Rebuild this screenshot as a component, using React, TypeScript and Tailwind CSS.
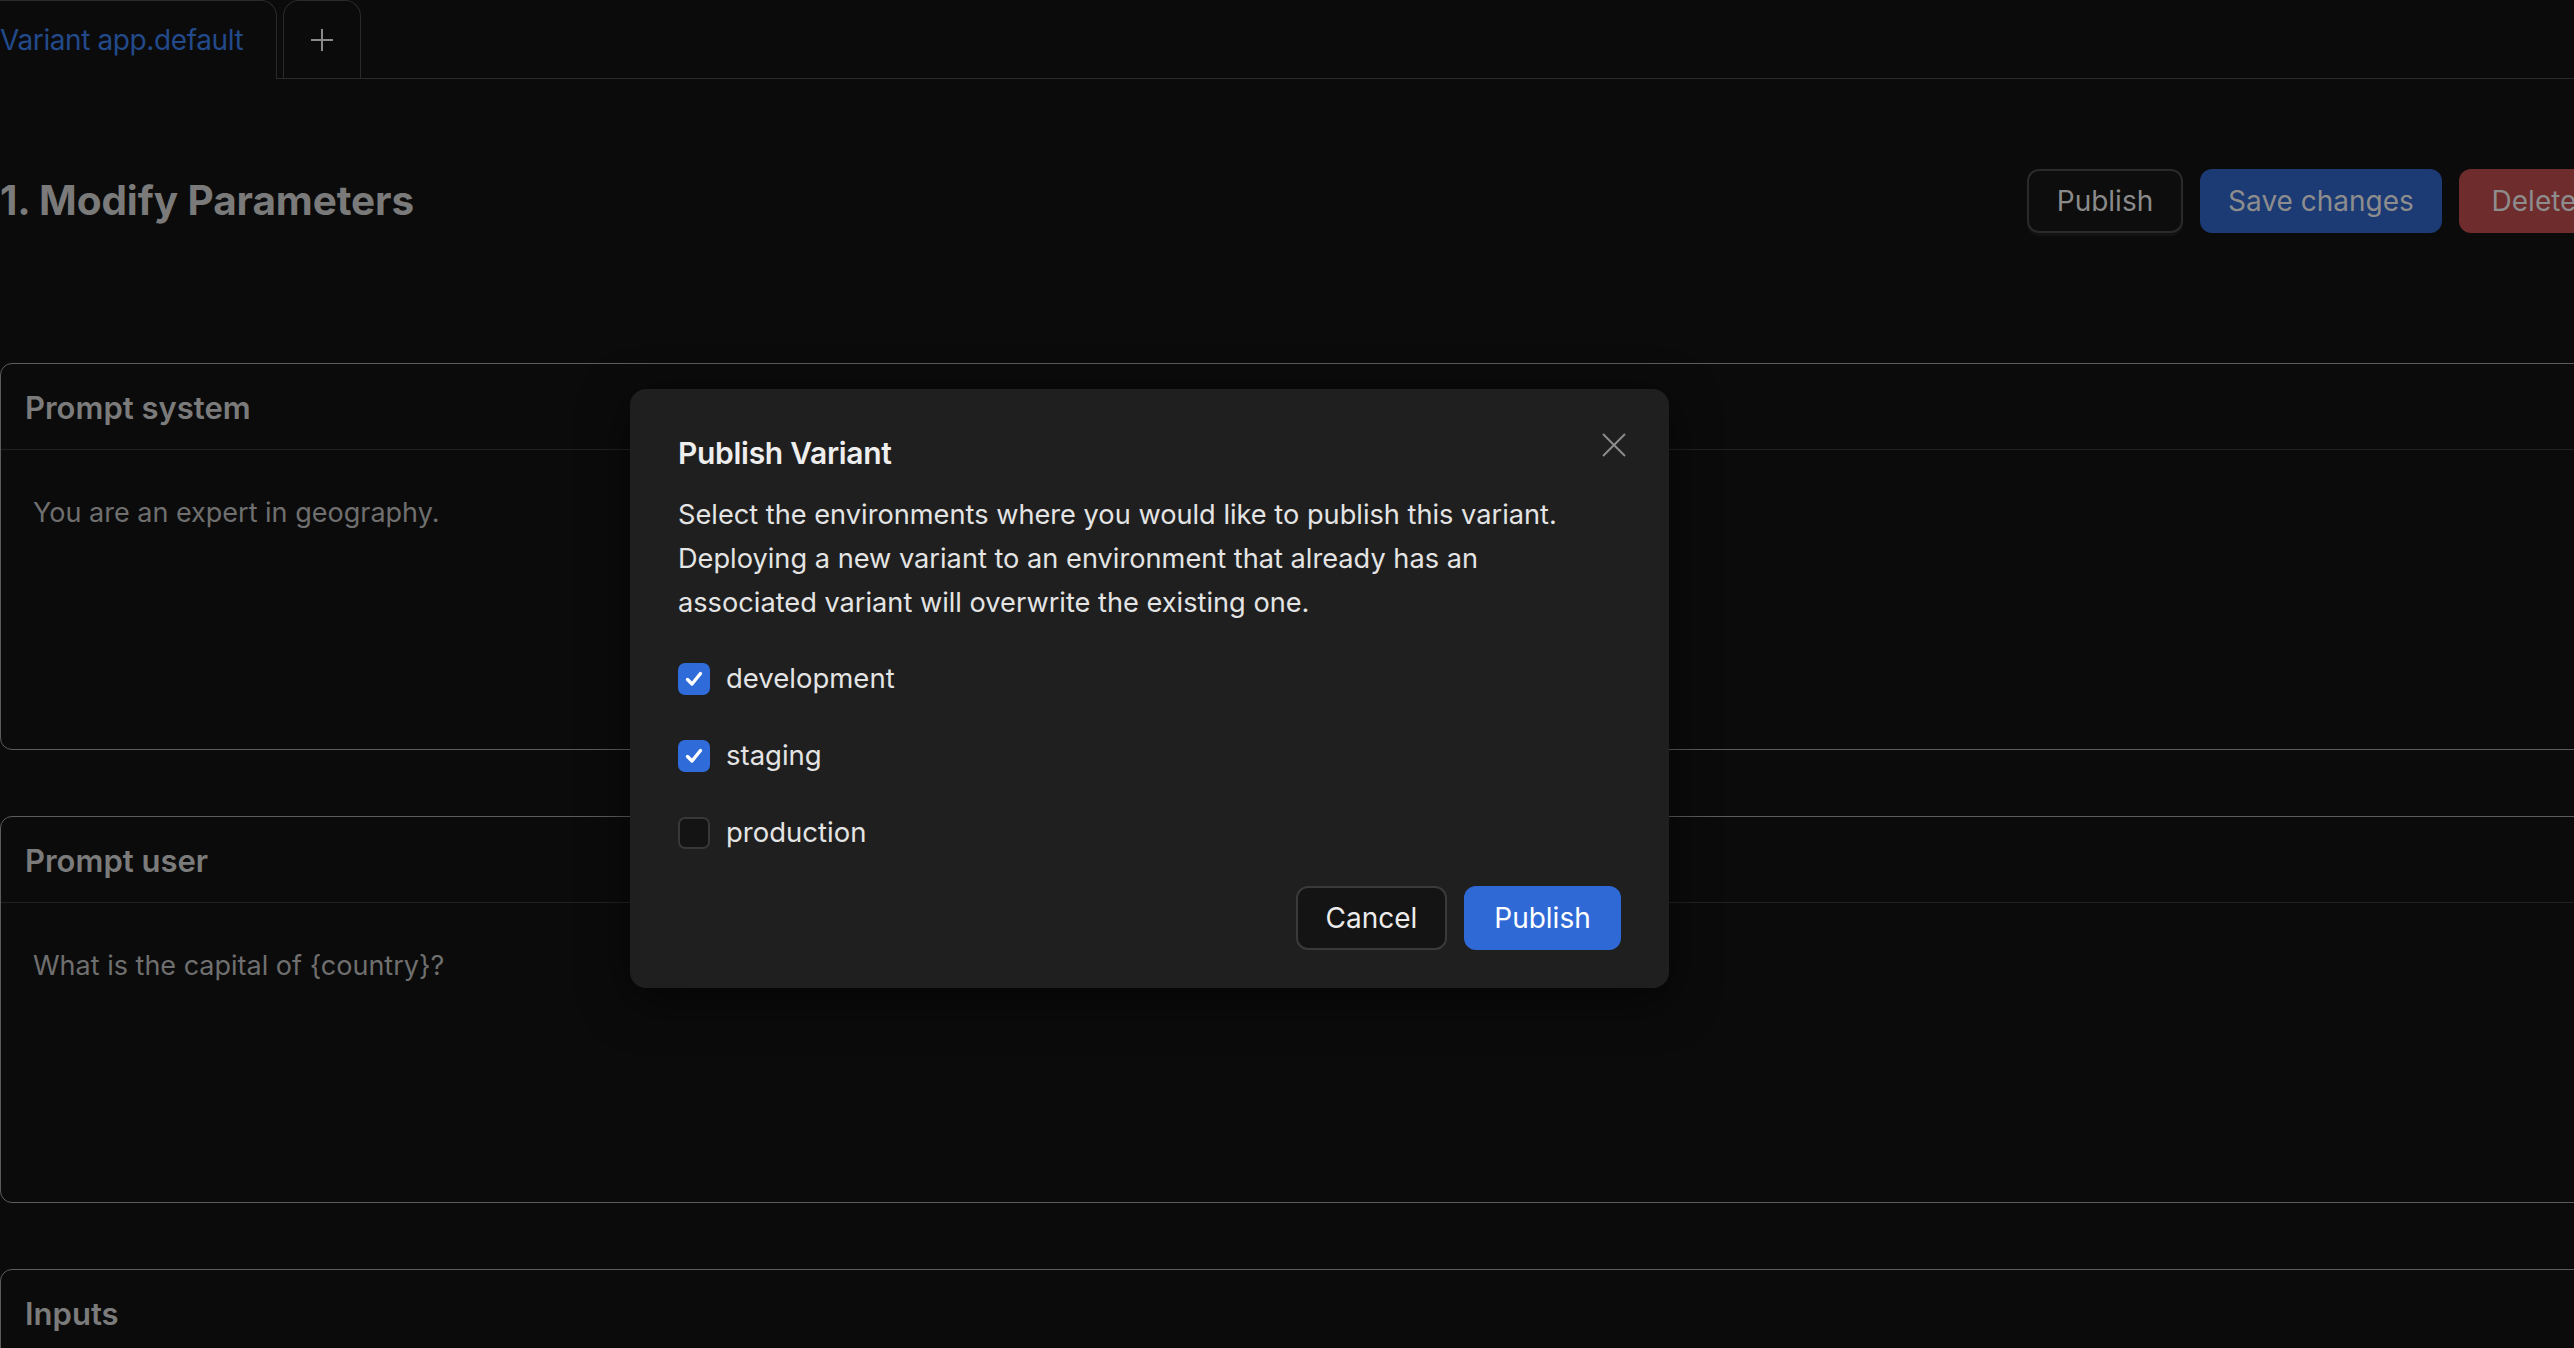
import React from "react";

function Check({ checked }: { checked: boolean }) {
  if (checked) {
    return (
      <div className="w-[32px] h-[32px] rounded-[7px] bg-[#2f6bd9] flex items-center justify-center shrink-0">
        <svg width="24" height="24" viewBox="0 0 24 24" fill="none" stroke="#ffffff" strokeWidth="3.4" strokeLinecap="round" strokeLinejoin="round">
          <polyline points="5.5 12.5 10 17 18.5 6.5" />
        </svg>
      </div>
    );
  }
  return <div className="w-[32px] h-[32px] rounded-[7px] bg-[#141414] border-2 border-[#383838] shrink-0" />;
}

function Card({ title, body }: { title: string; body?: string }) {
  return (
    <div className="h-[387px] rounded-[12px] border border-[#5c5c5c] flex flex-col">
      <div className="h-[86px] pt-[4px] border-b border-[#212121] flex items-center pl-[24px] text-[31px] font-semibold text-[#7b7b7b]">
        {title}
      </div>
      {body && (
        <div className="pt-[41px] pl-[32px] text-[27px] leading-[44px] text-[#6f6f6f]">{body}</div>
      )}
    </div>
  );
}

export default function App() {
  return (
    <div
      className="relative w-[2574px] h-[1348px] overflow-hidden bg-[#0b0b0b]"
      style={{ fontFamily: "Inter, 'Noto Sans', sans-serif" }}
    >
      <div className="w-[2609px]">
        {/* tab bar */}
        <div className="flex h-[79px]">
          <div className="w-[277px] h-full border-t border-r border-[#2a2a2a] rounded-tr-[16px] flex items-center text-[28px] text-[#234a8b] tracking-[-0.4px]">
            Variant app.default
          </div>
          <div className="flex-1 h-full border-b border-[#2a2a2a] flex">
            <div className="ml-[6px] w-[78px] h-full border-t border-l border-r border-[#2a2a2a] rounded-t-[16px] flex items-center justify-center">
              <svg width="24" height="24" viewBox="0 0 24 24" fill="none" stroke="#8a8a8a" strokeWidth="2">
                <line x1="12" y1="1" x2="12" y2="23" />
                <line x1="1" y1="12" x2="23" y2="12" />
              </svg>
            </div>
          </div>
        </div>

        {/* header */}
        <div className="mt-[90px] h-[64px] flex items-center justify-between">
          <div className="text-[40.5px] font-bold text-[#7a7a7a] tracking-[-0.1px]">1. Modify Parameters</div>
          <div className="flex gap-[17px]">
            <div className="w-[156px] h-[64px] rounded-[12px] border-2 border-[#2a2a2a] bg-[#0d0d0d] flex items-center justify-center text-[28px] text-[#8a8a8a] shadow-[0_3px_0_rgba(255,255,255,0.03)]">
              Publish
            </div>
            <div className="w-[242px] h-[64px] rounded-[12px] bg-[#1c3a74] flex items-center justify-center text-[28px] text-[#8d8d8d]">
              Save changes
            </div>
            <div className="w-[150px] h-[64px] rounded-[12px] bg-[#6f2c2c] flex items-center justify-center text-[28px] text-[#8d8d8d]">
              Delete
            </div>
          </div>
        </div>

        {/* cards */}
        <div className="mt-[130px] flex flex-col gap-[66px]">
          <Card title="Prompt system" body="You are an expert in geography." />
          <Card title="Prompt user" body="What is the capital of {country}?" />
          <Card title="Inputs" />
        </div>
      </div>

      {/* modal */}
      <div className="absolute left-[630px] top-[389px] w-[1039px] h-[599px] rounded-[16px] bg-[#1f1f1f] shadow-[0_12px_48px_rgba(0,0,0,0.55)] px-[48px] pt-[44px] flex flex-col">
        <div className="absolute right-[43px] top-[44px]">
          <svg width="24" height="24" viewBox="0 0 24 24" fill="none" stroke="#8c8c8c" strokeWidth="2">
            <line x1="1" y1="1" x2="23" y2="23" />
            <line x1="23" y1="1" x2="1" y2="23" />
          </svg>
        </div>
        <div className="h-[40px] flex items-center text-[30px] font-semibold text-[#eeeeee] tracking-[-0.3px]">Publish Variant</div>
        <div className="mt-[20px] text-[27.2px] leading-[44px] text-[#e4e4e4] w-[910px]">
          Select the environments where you would like to publish this variant. Deploying a new variant to an
          environment that already has an associated variant will overwrite the existing one.
        </div>
        <div className="mt-[32px] flex flex-col gap-[33px]">
          {[
            ["development", true],
            ["staging", true],
            ["production", false],
          ].map(([label, checked]) => (
            <div key={label as string} className="h-[44px] flex items-center gap-[16px]">
              <Check checked={checked as boolean} />
              <span className="text-[27.5px] text-[#e4e4e4]">{label as string}</span>
            </div>
          ))}
        </div>
        <div className="mt-[31px] flex justify-end gap-[17px]">
          <div className="w-[151px] h-[64px] rounded-[12px] border-2 border-[#3a3a3a] bg-[#141414] flex items-center justify-center text-[28px] text-[#ececec]">
            Cancel
          </div>
          <div className="w-[157px] h-[64px] rounded-[12px] bg-[#2f69d6] flex items-center justify-center text-[28px] text-[#ffffff]">
            Publish
          </div>
        </div>
      </div>
    </div>
  );
}
